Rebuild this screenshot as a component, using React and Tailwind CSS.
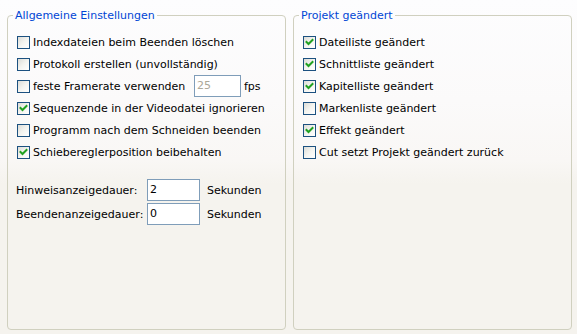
import React from "react";

const font = { fontFamily: '"DejaVu Sans", sans-serif' };

function Check({ checked }) {
  return (
    <span className="relative inline-block w-[13px] h-[13px] shrink-0 border border-[#1c5180] bg-gradient-to-br from-[#dcdcd7] via-[#f4f4f0] to-white">
      {checked && (
        <svg className="absolute left-0 top-0" width="11" height="11" viewBox="0 0 11 11">
          <path d="M2.5 5 L4.5 7 L8.5 3" fill="none" stroke="#21a121" strokeWidth="2" strokeLinecap="square" />
        </svg>
      )}
    </span>
  );
}

function Row({ checked, children, extra, labelClass = "" }) {
  return (
    <div className="flex items-center h-[22px]">
      <Check checked={checked} />
      <span className={"ml-[3px] whitespace-nowrap " + labelClass}>{children}</span>
      {extra}
    </div>
  );
}

function Group({ title, children }) {
  return (
    <fieldset className="w-[279px] h-[321px] border border-[#d0d0bf] rounded-[4px] m-0 p-0">
      <legend className="ml-[5px] px-[2px] text-[#0046d5] leading-[13px]">{title}</legend>
      {children}
    </fieldset>
  );
}

export default function App() {
  return (
    <div
      className="w-[577px] h-[334px] text-[11px] leading-[13px] text-black bg-[linear-gradient(to_bottom,#fdfdfe_0%,#fbfafa_30%,#f9f7f5_48%,#f5f3ee_55%,#f5f3ee_100%)] flex gap-[7px] pl-[7px] pt-[9px]"
      style={font}
    >
      <Group title="Allgemeine Einstellungen">
        <div className="pl-[9px] pt-[9px]">
          <Row>Indexdateien beim Beenden löschen</Row>
          <Row>Protokoll erstellen (unvollständig)</Row>
          <Row
            labelClass="w-[161px]"
            extra={
              <>
                <div className="w-[47px] h-[22px] border border-[#7f9db9] bg-white text-[#aca899] pl-[2px] pt-[3px]">25</div>
                <span className="ml-[3px]">fps</span>
              </>
            }
          >
            feste Framerate verwenden
          </Row>
          <Row checked>Sequenzende in der Videodatei ignorieren</Row>
          <Row>Programm nach dem Schneiden beenden</Row>
          <Row checked>Schiebereglerposition beibehalten</Row>
        </div>
        <div className="pl-[8px] pt-[16px] flex flex-col gap-[2px]">
          <div className="flex items-center">
            <span className="w-[131px]">Hinweisanzeigedauer:</span>
            <div className="w-[53px] h-[22px] border border-[#7f9db9] bg-white pl-[2px] pt-[3px]">2</div>
            <span className="ml-[7px]">Sekunden</span>
          </div>
          <div className="flex items-center">
            <span className="w-[131px]">Beendenanzeigedauer:</span>
            <div className="w-[53px] h-[22px] border border-[#7f9db9] bg-white pl-[2px] pt-[3px]">0</div>
            <span className="ml-[7px]">Sekunden</span>
          </div>
        </div>
      </Group>
      <Group title="Projekt geändert">
        <div className="pl-[9px] pt-[9px]">
          <Row checked>Dateiliste geändert</Row>
          <Row checked>Schnittliste geändert</Row>
          <Row checked>Kapitelliste geändert</Row>
          <Row>Markenliste geändert</Row>
          <Row checked>Effekt geändert</Row>
          <Row>Cut setzt Projekt geändert zurück</Row>
        </div>
      </Group>
    </div>
  );
}
